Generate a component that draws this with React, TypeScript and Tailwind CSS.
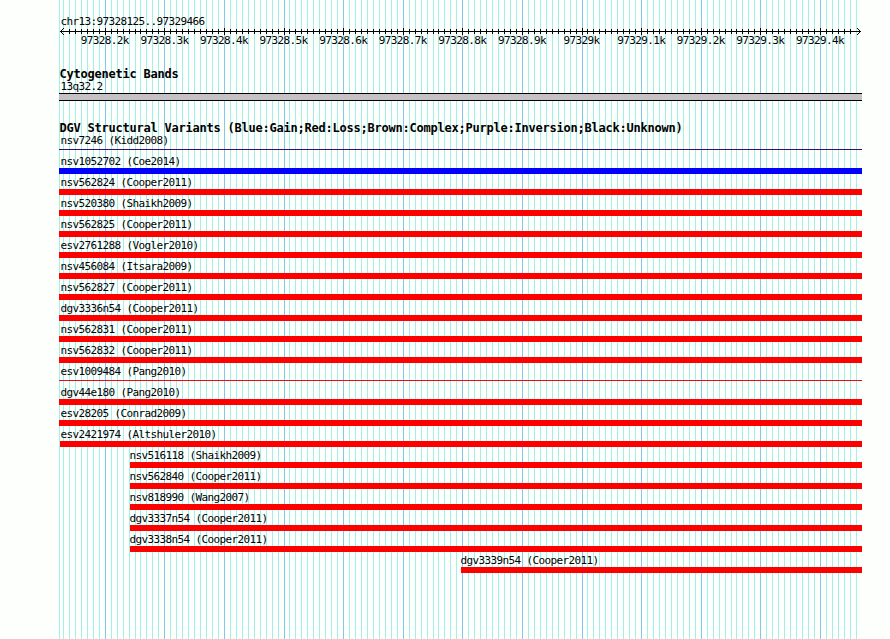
const MONO = "font-['DejaVu_Sans_Mono','Liberation_Mono',monospace]";
const LABEL = "whitespace-pre text-[11px] tracking-[-0.622px]";
const TITLE = "whitespace-pre text-[12px] font-bold tracking-[-0.224px]";

const FIRST_MAJOR = 105.2;
const STEP = 5.96;
const ticks = Array.from({ length: 134 }, (_, i) => i - 7).map((j) => ({
  x: Math.floor(FIRST_MAJOR + STEP * j),
  major: j % 10 === 0,
})).filter((t) => t.x < 860);

const scale = [
  "97328.2k", "97328.3k", "97328.4k", "97328.5k", "97328.6k", "97328.7k", "97328.8k",
  "97328.9k", "97329k", "97329.1k", "97329.2k", "97329.3k", "97329.4k",
];

type Variant = { name: string; start?: string; kind?: string };

const THICK = "mt-[14px] h-[6px] bg-[#ff0000]";

const variants: Variant[] = [
  { name: "nsv7246 (Kidd2008)", kind: "mt-[16px] h-px bg-[#3c0a6c]" },
  { name: "nsv1052702 (Coe2014)", kind: "mt-[14px] h-[6px] bg-[#0000ff]" },
  { name: "nsv562824 (Cooper2011)" },
  { name: "nsv520380 (Shaikh2009)" },
  { name: "nsv562825 (Cooper2011)" },
  { name: "esv2761288 (Vogler2010)" },
  { name: "nsv456084 (Itsara2009)" },
  { name: "nsv562827 (Cooper2011)" },
  { name: "dgv3336n54 (Cooper2011)" },
  { name: "nsv562831 (Cooper2011)" },
  { name: "nsv562832 (Cooper2011)" },
  { name: "esv1009484 (Pang2010)", kind: "mt-[16px] h-px bg-[#ee0a14]" },
  { name: "dgv44e180 (Pang2010)" },
  { name: "esv28205 (Conrad2009)" },
  { name: "esv2421974 (Altshuler2010)", start: "ml-px" },
  { name: "nsv516118 (Shaikh2009)", start: "ml-[71px]" },
  { name: "nsv562840 (Cooper2011)", start: "ml-[71px]" },
  { name: "nsv818990 (Wang2007)", start: "ml-[71px]" },
  { name: "dgv3337n54 (Cooper2011)", start: "ml-[71px]" },
  { name: "dgv3338n54 (Cooper2011)", start: "ml-[71px]" },
  { name: "dgv3339n54 (Cooper2011)", start: "ml-[402px]" },
];

function Grid() {
  return (
    <svg className="absolute inset-0" width="890" height="639" shapeRendering="crispEdges">
      <rect x="59" y="0" width="1" height="639" fill="#a5efe9" />
      {ticks.map((t) => (
        <rect key={t.x} x={t.x} y="0" width="1" height="639" fill={t.major ? "#82c8ec" : "#a5efe9"} />
      ))}
    </svg>
  );
}

function Ruler() {
  return (
    <svg className="block h-[9px] w-[890px]" viewBox="0 0 890 9" shapeRendering="crispEdges">
      <rect x="60" y="4" width="801" height="1" />
      {ticks.filter((t) => t.x > 63 && t.x < 856).map((t) => (
        <rect key={t.x} x={t.x} y={t.major ? 1 : 2} width="1" height={t.major ? 7 : 5} />
      ))}
      {[1, 2, 3].map((d) => (
        <g key={d}>
          <rect x={60 + d} y={4 - d} width="1" height="1" />
          <rect x={60 + d} y={4 + d} width="1" height="1" />
          <rect x={860 - d} y={4 - d} width="1" height="1" />
          <rect x={860 - d} y={4 + d} width="1" height="1" />
        </g>
      ))}
    </svg>
  );
}

function VariantRow({ name, start = "", kind = THICK }: Variant) {
  const inset = start === "" ? "pl-[1.4px]" : start === "ml-px" ? "pl-[0.4px]" : "-ml-[0.6px]";
  return (
    <div className={`flex h-[21px] ${start}`}>
      <div className={`w-0 overflow-visible leading-[15px] ${LABEL}`}>
        <span className={`inline-block ${inset}`}>{name}</span>
      </div>
      <div className={`grow ${kind}`} />
    </div>
  );
}

export default function App() {
  return (
    <div className={`relative h-[639px] w-[890px] overflow-hidden bg-[#fdfffc] text-black ${MONO}`}>
      <Grid />
      <div className="relative flex flex-col">
        <div className={`mt-[14px] h-[13px] pl-[60.4px] leading-[16px] ${LABEL}`}>
          chr13:97328125..97329466
        </div>
        <Ruler />
        <div className="-mt-[3px] ml-[75px] flex h-[14px] w-[775px]">
          {scale.map((s) => (
            <div key={s} className={`w-[59.6px] shrink-0 text-center leading-[15px] ${LABEL}`}>{s}</div>
          ))}
        </div>
        <div className={`mt-[20px] h-[13px] pl-[59.4px] leading-[14px] ${TITLE}`}>Cytogenetic Bands</div>
        <div className={`h-[13px] pl-[60.4px] leading-[13px] ${LABEL}`}>13q32.2</div>
        <div className="ml-[59px] h-[8px] w-[803px] border-y border-black bg-[#c5c1c5]" />
        <div className={`mt-[20px] h-[12px] pl-[59.4px] leading-[14px] ${TITLE}`}>
          DGV Structural Variants (Blue:Gain;Red:Loss;Brown:Complex;Purple:Inversion;Black:Unknown)
        </div>
        <div className="ml-[59px] w-[803px]">
          {variants.map((v) => (
            <VariantRow key={v.name} {...v} />
          ))}
        </div>
      </div>
    </div>
  );
}
